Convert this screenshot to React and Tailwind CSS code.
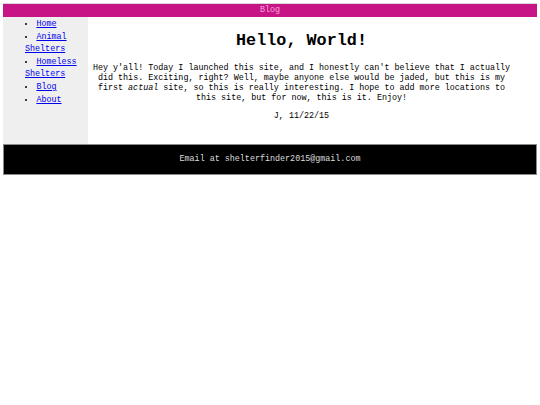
export default function App() {
  const links = [
    ["Home"],
    ["Animal Shelters"],
    ["Homeless Shelters"],
    ["Blog"],
    ["About"],
  ];
  return (
    <div className="min-h-[405px] bg-white px-[3px] pt-[3px] font-['Liberation_Mono',monospace] text-[8.4px] text-black">
      <div className="flex h-[14px] items-center justify-center border-t border-[#d8d8d8] bg-[#c71585] text-[#f7a8dc]">
        Blog
      </div>
      <div className="flex h-[127px]">
        <div className="w-[85px] shrink-0 bg-[#efefef] pt-[1px]">
          <ul className="m-0 list-inside list-disc pl-[22px] leading-[12.6px]">
            {links.map(([l]) => (
              <li key={l}>
                <a href="#" className="text-[#0000ee] underline">
                  {l}
                </a>
              </li>
            ))}
          </ul>
        </div>
        <div className="w-[427px] pt-[3px] text-center">
          <h1 className="mt-[11.3px] mb-[12.5px] text-[16.8px] font-bold leading-[19px]">Hello, World!</h1>
          <p className="my-[8.4px] leading-[10px]">
            Hey y'all! Today I launched this site, and I honestly can't believe that I actually did this. Exciting, right? Well, maybe anyone else would be jaded, but this is my first <i>actual</i> site, so this is really interesting. I hope to add more locations to this site, but for now, this is it. Enjoy!
          </p>
          <p className="my-[8.4px] leading-[10px]">J, 11/22/15</p>
        </div>
      </div>
      <div className="flex h-[31px] items-center justify-center border border-[#8a8a8a] bg-black text-[#dddddd]">
        Email at shelterfinder2015@gmail.com
      </div>
    </div>
  );
}
